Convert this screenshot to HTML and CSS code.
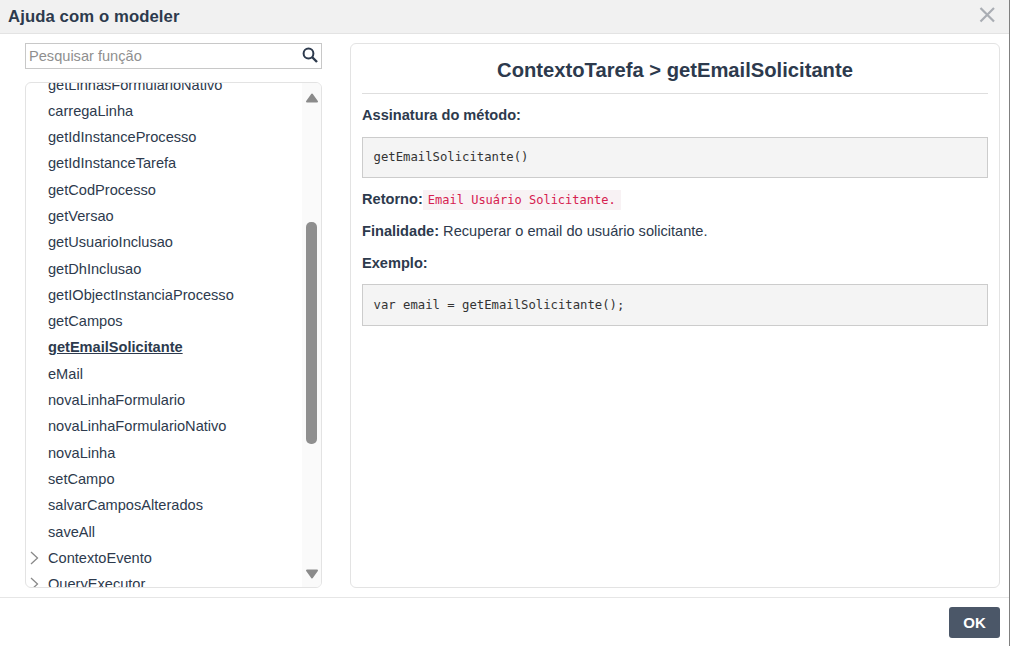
FILE: index.html
```html
<!DOCTYPE html>
<html lang="pt">
<head>
<meta charset="utf-8">
<title>Ajuda com o modeler</title>
<link rel="stylesheet" href="styles.css">
</head>
<body>
<div class="dialog">
  <header class="head">
    <h1 class="head-title">Ajuda com o modeler</h1>
    <svg class="close" width="16" height="16" viewBox="0 0 16 16"><path d="M1.5 1L15 14.5M15 1L1.5 14.5" stroke="#a9adb3" stroke-width="2.2" fill="none"/></svg>
  </header>
  <main class="body">
    <aside class="side">
      <div class="search">
        <span class="search-text">Pesquisar função</span>
        <svg class="search-icon" width="16" height="16" viewBox="0 0 16 16"><circle cx="6.5" cy="6.5" r="4.9" stroke="#2d3a4d" stroke-width="2" fill="none"/><path d="M10 10L15 15" stroke="#2d3a4d" stroke-width="2.4" fill="none"/></svg>
      </div>
      <div class="tree">
        <ul class="list">
          <li class="row">getLinhasFormularioNativo</li>
          <li class="row">carregaLinha</li>
          <li class="row">getIdInstanceProcesso</li>
          <li class="row">getIdInstanceTarefa</li>
          <li class="row">getCodProcesso</li>
          <li class="row">getVersao</li>
          <li class="row">getUsuarioInclusao</li>
          <li class="row">getDhInclusao</li>
          <li class="row">getIObjectInstanciaProcesso</li>
          <li class="row">getCampos</li>
          <li class="row active">getEmailSolicitante</li>
          <li class="row">eMail</li>
          <li class="row">novaLinhaFormulario</li>
          <li class="row">novaLinhaFormularioNativo</li>
          <li class="row">novaLinha</li>
          <li class="row">setCampo</li>
          <li class="row">salvarCamposAlterados</li>
          <li class="row">saveAll</li>
          <li class="row"><svg class="caret" width="9" height="14" viewBox="0 0 9 14"><path d="M1 1L7.5 7L1 13" stroke="#8a8a8a" stroke-width="1.3" fill="none"/></svg>ContextoEvento</li>
          <li class="row"><svg class="caret" width="9" height="14" viewBox="0 0 9 14"><path d="M1 1L7.5 7L1 13" stroke="#8a8a8a" stroke-width="1.3" fill="none"/></svg>QueryExecutor</li>
        </ul>
        <div class="scrollbar">
          <svg class="arrow up" width="14" height="10" viewBox="0 0 14 10"><path d="M7 1.5L12 8.5H2Z" fill="#8b8b8b" stroke="#8b8b8b" stroke-width="2" stroke-linejoin="round"/></svg>
          <span class="thumb"></span>
          <svg class="arrow down" width="14" height="10" viewBox="0 0 14 10"><path d="M2 1.5H12L7 8.5Z" fill="#8b8b8b" stroke="#8b8b8b" stroke-width="2" stroke-linejoin="round"/></svg>
        </div>
      </div>
    </aside>
    <section class="panel">
      <h2 class="panel-title">ContextoTarefa &gt; getEmailSolicitante</h2>
      <p class="line label">Assinatura do método:</p>
      <pre class="code">getEmailSolicitante()</pre>
      <p class="line ret"><strong>Retorno:</strong><code class="inline">Email Usuário Solicitante.</code></p>
      <p class="line purpose"><strong>Finalidade:</strong> Recuperar o email do usuário solicitante.</p>
      <p class="line label example">Exemplo:</p>
      <pre class="code">var email = getEmailSolicitante();</pre>
    </section>
  </main>
  <footer class="foot">
    <button class="ok" type="button">OK</button>
  </footer>
</div>
</body>
</html>
```
FILE: styles.css
```css
* { box-sizing: border-box; }
html, body { margin: 0; padding: 0; height: 100%; background: #fff; }
body { font-family: "Liberation Sans", Arial, sans-serif; color: #2d3a4d; overflow: hidden; }
.dialog { width: 1010px; height: 646px; display: flex; flex-direction: column; border-right: 1px solid #808080; }
.head {
  height: 34px; flex: none; background: #f1f1f1; border-bottom: 1px solid #e3e3e3;
  display: flex; align-items: center; justify-content: space-between; padding: 0 13px 0 8px;
}
.head-title { margin: 0; font-size: 16.7px; font-weight: 700; color: #2d3a4d; letter-spacing: 0.1px; }
.close { display: block; margin-top: -3px; margin-right: 1px; }
.body { flex: none; height: 564px; display: flex; padding: 9px 9px 0 25px; gap: 28px; border-bottom: 1px solid #e6e6e6; }
.side { width: 297px; flex: none; height: 545px; display: flex; flex-direction: column; gap: 13px; }
.search {
  height: 26px; flex: none; border: 1px solid #c8c8c8; display: flex; align-items: center;
  justify-content: space-between; padding: 0 3px 0 3px;
}
.search-text { font-size: 14.6px; color: #8f8f8f; }
.search-icon { display: block; margin-top: -2px; }
.tree {
  position: relative; flex: 1; min-height: 0; overflow: hidden;
  border: 1px solid #e3e3e3; border-radius: 6px;
}
.list { list-style: none; margin: -11.5px 0 0; padding: 0; }
.row { height: 26.3px; line-height: 26.3px; padding-left: 22px; font-size: 14.6px; color: #2d3a4d; position: relative; white-space: nowrap; }
.active { font-weight: 700; text-decoration: underline; }
.caret { position: absolute; left: 4px; top: 6px; }
.scrollbar {
  position: absolute; top: 0; right: 0; bottom: 0; width: 19px; background: #fafafa;
  display: flex; flex-direction: column; align-items: center;
}
.arrow { display: block; flex: none; }
.up { margin-top: 10px; }
.down { margin-top: 125px; }
.thumb { width: 11px; height: 222px; background: #8f8f8f; border-radius: 5px; margin-top: 119px; flex: none; }
.panel {
  width: 650px; flex: none; height: 545px; border: 1px solid #e3e3e3; border-radius: 6px;
  padding: 0 11px;
}
.panel-title {
  margin: 0; height: 50px; line-height: 52px; text-align: center; font-size: 20.2px; font-weight: 700;
  color: #2d3a4d; border-bottom: 1px solid #dedede;
}
.line { margin: 0; font-size: 14.6px; line-height: 20px; color: #2d3a4d; }
.label { font-weight: 700; }
.panel-title + .label { margin-top: 11px; }
.code {
  margin: 12px 0 0; height: 41px; line-height: 38px; padding: 0 10.5px; background: #f4f4f4;
  border: 1px solid #ccc; font-family: "DejaVu Sans Mono", monospace; font-size: 12.25px; color: #333;
}
.ret { margin-top: 11px; display: flex; align-items: flex-start; }
.inline {
  font-family: "DejaVu Sans Mono", monospace; font-size: 12px; color: #d6204f; background: #f8f2f4;
  padding: 0 5px; height: 20px; line-height: 20px; margin-top: 1px;
}
.purpose { margin-top: 11px; }
.example { margin-top: 12px; }
.example + .code { margin-top: 11px; height: 42px; line-height: 40px; }
.foot { flex: 1; display: flex; justify-content: flex-end; align-items: flex-start; padding: 9px 9px 0 0; }
.ok {
  width: 51px; height: 31px; background: #4b5768; color: #fff; border: 0; border-radius: 3px;
  font: 700 15px "Liberation Sans", Arial, sans-serif; padding: 0;
}
```
